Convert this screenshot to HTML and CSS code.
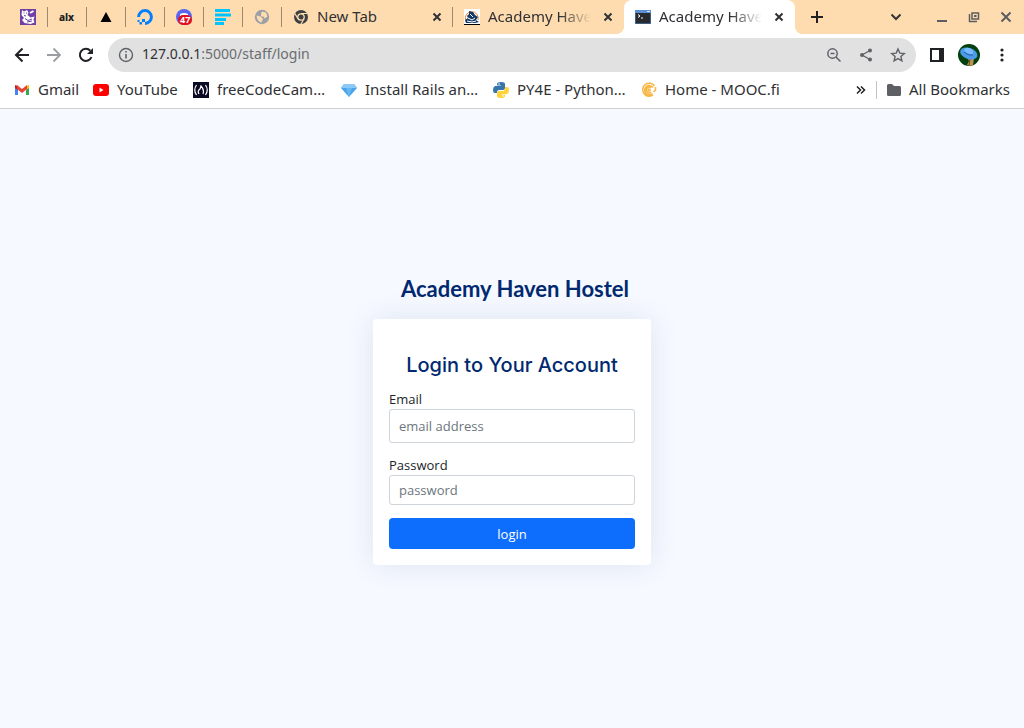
FILE: index.html
```html
<!DOCTYPE html>
<html lang="en">
<head>
<meta charset="utf-8">
<meta name="viewport" content="width=device-width, initial-scale=1">
<title>Academy Haven Hostel</title>
<link rel="stylesheet" href="styles.css">
</head>
<body>
<header class="browser">
  <div class="tabs">
    <button class="tab tab-pinned" aria-label="Pinned cat tab"><svg width="16" height="16" viewBox="0 0 16 16"><path fill="#7040a5" d="M0 0h16v16H0z"/><path fill="#fff" d="M2 1l2 1.500L7 1l1.500 2.500-1 2.500 3 2.500 4-1-1 3 1 3-4 1.500-6-1-2.500-3L4 9 1.500 6z"/><path d="M3.500 4h1M6 4h1M4 6.500l2 .500M5 9.500l3 2 4-1.500M7 13l5-1" stroke="#7040a5" fill="none"/><path d="M10 4l3.500-2" stroke="#fff" stroke-width="2"/></svg></button>
    <button class="tab tab-pinned tab-word">alx</button>
    <button class="tab tab-pinned" aria-label="Triangle tab"><svg width="16" height="16" viewBox="0 0 16 16"><path d="M8 3l5.500 10h-11z"/></svg></button>
    <button class="tab tab-pinned" aria-label="Cloud tab"><svg width="16" height="16" viewBox="0 0 16 16"><path d="M1.600 8a6.400 6.400 0 1 1 6.400 6.400" fill="none" stroke="#0080ff" stroke-width="3"/><path fill="#0080ff" d="M5 10h3v3H5zM2.500 13H5v2.500H2.500zM.500 11h2v2h-2z"/></svg></button>
    <button class="tab tab-pinned tab-chat" aria-label="Chat tab"><svg width="16" height="16" viewBox="0 0 16 16"><circle cx="8" cy="8" r="8" fill="#5865f2"/><path d="M4 5q4-2 8 0v2H4z" fill="#fff"/></svg><span class="count">47</span></button>
    <button class="tab tab-pinned" aria-label="Notes tab"><svg width="16" height="16" viewBox="0 0 16 16"><path fill="#00c4ff" d="M0 0h15v3H0zM0 4.500h16v3H0zM0 9h11v3H0zM0 13h9v3H0z"/></svg></button>
    <button class="tab tab-pinned" aria-label="Globe tab"><svg width="16" height="16" viewBox="0 0 16 16"><circle cx="8" cy="8" r="7.200" fill="#9aa0a6"/><path d="M2.500 6.500l4 1 2.500 2.500-1.500 3.500Q3 12.500 2.500 6.500M8 2.500l4 1 1.500 4-3 2-1-2H7V5z" fill="#fedcb0"/></svg></button>
    <div class="tab tab-wide"><svg width="16" height="16" viewBox="0 0 16 16"><circle cx="8" cy="8" r="7" fill="#3c4043"/><circle cx="8" cy="8" r="3.200" fill="#3c4043" stroke="#fedcb0" stroke-width="1.300"/><path d="M8 4.500h6.500M5 9.800L1.700 4.200M11 9.800l-3 5.200" stroke="#fedcb0" stroke-width="1.200"/></svg><span class="tab-title">New Tab</span><button class="close" aria-label="Close tab"><svg width="10" height="10" viewBox="0 0 10 10"><path d="M1.500 1.500l7 7m0-7l-7 7"/></svg></button></div>
    <div class="tab tab-wide tab-before"><svg width="16" height="16" viewBox="0 0 16 16"><path fill="#fff" d="M0 0h16v16H0z"/><path d="M1.500 11A6.500 6.500 0 1 1 14 11" fill="none" stroke="#e58a3c"/><path fill="#173b66" d="M5 2l4 1 2 3 3 2-2 3 3 2-4 1H2l-1-3 3-2-1-2 2-2z"/><path d="M6 5l3 3M4 9l4 2 3-2M3 12l5 1 4-1" stroke="#fff" fill="none"/><path d="M0 15h16v1H0z"/></svg><span class="tab-title">Academy Haven</span><button class="close" aria-label="Close tab"><svg width="10" height="10" viewBox="0 0 10 10"><path d="M1.500 1.500l7 7m0-7l-7 7"/></svg></button></div>
    <div class="tab tab-wide tab-active"><svg width="16" height="16" viewBox="0 0 16 16"><path fill="#5a8fd8" d="M0 1h16v14H0z"/><path fill="#272b30" d="M.500 4h15v10.500H.500z"/><path d="M3 5.500l2 1.500-2 1.500M6 9h2" fill="none" stroke="#fff"/><path d="M12 2.500h3" stroke="#dce8fa"/></svg><span class="tab-title">Academy Haven</span><button class="close" aria-label="Close tab"><svg width="10" height="10" viewBox="0 0 10 10"><path d="M1.500 1.500l7 7m0-7l-7 7"/></svg></button></div>
    <button class="new-tab" aria-label="New tab"><svg width="14" height="14" viewBox="0 0 14 14"><path d="M7 1v12M1 7h12" stroke="#202124" stroke-width="2"/></svg></button>
    <div class="window">
      <button aria-label="Search tabs"><svg width="12" height="12" viewBox="0 0 12 12"><path d="M1.500 3.500L6 8l4.500-4.500" fill="none" stroke="#333" stroke-width="2"/></svg></button>
      <button aria-label="Minimize"><svg width="12" height="12" viewBox="0 0 12 12"><path d="M1 10h10" stroke="#5b5d60" stroke-width="2"/></svg></button>
      <button aria-label="Restore"><svg width="12" height="12" viewBox="0 0 12 12"><path d="M4 2h6.500v6H4zM1.500 3v7.500H9" fill="none" stroke="#5b5d60" stroke-width="1.500"/><path d="M6 4h2.500v2H6z" fill="#5b5d60"/></svg></button>
      <button aria-label="Close window"><svg width="12" height="12" viewBox="0 0 12 12"><path d="M1.500 1.500l9 9m0-9l-9 9" stroke="#5b5d60" stroke-width="2"/></svg></button>
    </div>
  </div>
  <div class="toolbar">
    <div class="history">
      <button aria-label="Back"><svg width="16" height="16" viewBox="0 0 16 16"><path d="M15 8H2m6.500-6.500L2 8l6.500 6.500" fill="none" stroke="#202124" stroke-width="2"/></svg></button>
      <button aria-label="Forward"><svg width="16" height="16" viewBox="0 0 16 16"><path d="M1 8h13M7.500 1.500L14 8l-6.500 6.500" fill="none" stroke="#9b9da0" stroke-width="1.800"/></svg></button>
      <button aria-label="Reload"><svg width="16" height="16" viewBox="0 0 16 16"><path d="M13.500 10a6 6 0 1 1-1.200-6.200" fill="none" stroke="#202124" stroke-width="2"/><path d="M15 1v6H9z" fill="#202124"/></svg></button>
    </div>
    <div class="address">
      <svg width="16" height="16" viewBox="0 0 16 16"><circle cx="8" cy="8" r="6.500" fill="none" stroke="#5f6368" stroke-width="1.400"/><path d="M8 7v4.500M8 4v1.600" stroke="#5f6368" stroke-width="1.600"/></svg>
      <span class="url">127.0.0.1<span class="path">:5000/staff/login</span></span>
      <button aria-label="Zoom"><svg width="16" height="16" viewBox="0 0 16 16"><circle cx="6.500" cy="6.500" r="4.700" fill="none" stroke="#5f6368" stroke-width="1.500"/><path d="M10 10l4.500 4.500M4.500 6.500h4" stroke="#5f6368" stroke-width="1.500"/></svg></button>
      <button aria-label="Share"><svg width="16" height="16" viewBox="0 0 16 16"><path d="M12 3.500L4 8l8 4.500" fill="none" stroke="#5f6368" stroke-width="1.300"/><g fill="#5f6368"><circle cx="12" cy="3.500" r="2"/><circle cx="4" cy="8" r="2"/><circle cx="12" cy="12.500" r="2"/></g></svg></button>
      <button aria-label="Bookmark this page"><svg width="16" height="16" viewBox="0 0 16 16"><path d="M8 2l1.800 4.100 4.500.400-3.400 3 1 4.400L8 11.600l-3.900 2.300 1-4.400-3.400-3 4.500-.400z" fill="none" stroke="#5f6368" stroke-width="1.400"/></svg></button>
    </div>
    <button aria-label="Side panel"><svg width="14" height="14" viewBox="0 0 14 14"><path d="M1 1h12v12H1z" fill="none" stroke="#202124" stroke-width="2"/><path d="M9 1h4v12H9z" fill="#202124"/></svg></button>
    <button aria-label="Profile"><svg width="22" height="22" viewBox="0 0 22 22"><circle cx="11" cy="11" r="11" fill="#03400f"/><path d="M8 11l8 3-1 7q-3 1-6 0l2-4z" fill="#c0934e"/><path d="M12 15l-1 6" stroke="#6e4a20"/><ellipse cx="11" cy="9.500" rx="9" ry="5.500" transform="rotate(20 11 9)" fill="#4b9bea"/><path d="M6 7q1-4 5-3 5 1 4 6-5 1-9-3" fill="#79bbff"/><path d="M6 8q4 4 9 3" fill="none" stroke="#225da8"/></svg></button>
    <button aria-label="Menu"><svg width="16" height="16" viewBox="0 0 16 16" fill="#202124"><circle cx="8" cy="3" r="1.600"/><circle cx="8" cy="8" r="1.600"/><circle cx="8" cy="13" r="1.600"/></svg></button>
  </div>
  <nav class="bookmarks">
    <div class="links">
      <a href="#"><svg width="16" height="16" viewBox="0 0 16 16"><path d="M1 4v9h3V6z" fill="#4285f4"/><path d="M15 4v9h-3V6z" fill="#34a853"/><path d="M1 3l3 1v4L1 6z" fill="#c5221f"/><path d="M15 3l-3 1v4l3-2z" fill="#fbbc04"/><path d="M3 3l5 4 5-4v4l-5 4-5-4z" fill="#ea4335"/></svg><span>Gmail</span></a>
      <a href="#"><svg width="16" height="16" viewBox="0 0 16 16"><rect y="2" width="16" height="12" rx="3" fill="#f00"/><path d="M6.500 5.500l4 2.500-4 2.500z" fill="#fff"/></svg><span>YouTube</span></a>
      <a href="#"><svg width="16" height="16" viewBox="0 0 16 16"><path fill="#0a0a23" d="M0 0h16v16H0z"/><path d="M3.500 3Q0 8 3.500 13M12.500 3q3.500 5 0 10" fill="none" stroke="#fff" stroke-width="1.200"/><path d="M6 12q-2-3 1-5l1-3q3.500 4 2 8" fill="none" stroke="#fff" stroke-width="1.200"/></svg><span>freeCodeCam…</span></a>
      <a href="#"><svg width="16" height="16" viewBox="0 0 16 16"><path d="M3 2h10l3 4-8 9-8-9z" fill="#4aa3ea"/><path d="M3 2h10l3 4H0z" fill="#8bcaf7"/><path d="M5 6h6l-3 9z" fill="#65b7f3"/></svg><span>Install Rails an…</span></a>
      <a href="#"><svg width="16" height="16" viewBox="0 0 16 16"><path d="M4 4V2q0-2 4-2t4 2v4q0 2-2 2H6q-2 0-2 3H2q-2 0-2-3t2-4h6V3.500H4z" fill="#3776ab"/><path d="M12 12v2q0 2-4 2t-4-2v-3q0-2 2-2h4q2 0 2-4h2q2 0 2 3t-2 4H8v.500h4z" fill="#ffd43b"/><circle cx="6" cy="2" r=".8" fill="#fff"/><circle cx="10" cy="14" r=".8" fill="#fff"/></svg><span>PY4E - Python…</span></a>
      <a href="#"><svg width="16" height="16" viewBox="0 0 16 16" fill="none" stroke="#f8b541" stroke-width="1.500"><path d="M13.500 4A6.500 6.500 0 1 0 12 13M12 5.500A4.600 4.600 0 1 0 11.500 11.500M10 6a2.800 2.800 0 1 0 0 4M14.500 5v3l-2 2"/><circle cx="8" cy="8" r="1"/></svg><span>Home - MOOC.fi</span></a>
    </div>
    <button aria-label="More bookmarks"><svg width="10" height="10" viewBox="0 0 10 10"><path d="M1 1.500L4.500 5 1 8.500M5 1.500L8.500 5 5 8.500" fill="none" stroke="#202124" stroke-width="1.500"/></svg></button>
    <a class="all" href="#"><svg width="14" height="16" viewBox="0 0 14 16"><path d="M0 3.500Q0 2 1.500 2H5l2 2h5.500Q14 4 14 5.500v7q0 1.500-1.500 1.500h-11Q0 14 0 12.500z" fill="#5f6063"/></svg><span>All Bookmarks</span></a>
  </nav>
</header>
<main class="page">
  <div class="login">
    <h1 class="brand">Academy Haven Hostel</h1>
    <form class="card">
      <h2 class="heading">Login to Your Account</h2>
      <div class="field"><label for="email">Email</label><input class="email" id="email" type="email" placeholder="email address"></div>
      <div class="field"><label for="password">Password</label><input id="password" type="password" placeholder="password"></div>
      <button class="submit" type="submit">login</button>
    </form>
  </div>
</main>
</body>
</html>
```
FILE: styles.css
```css
* { box-sizing: border-box; }
body {
  margin: 0;
  min-height: 100vh;
  display: flex;
  flex-direction: column;
  background: #f6f9ff;
  color: #212529;
  font-family: "Open Sans", sans-serif;
  font-size: 13px;
}
button, input { font: inherit; }
button { border: 0; padding: 0; background: none; color: inherit; }
a { color: inherit; text-decoration: none; }
svg { display: block; flex: none; }

.browser {
  background: #fff;
  border-bottom: 1px solid #d0d0d0;
  font-family: "Noto Sans", sans-serif;
  font-size: 15px;
  line-height: 20px;
  color: #303134;
}
.browser button { display: flex; align-items: center; justify-content: center; flex: none; }

/* Tab strip */
.tabs { display: flex; height: 34px; padding-left: 9px; background: #fedcb0; }
.tab { display: flex; align-items: center; }
.tab:not(.tab-active):not(.tab-before) {
  background: linear-gradient(#9b8970, #9b8970) right center / 1px 20px no-repeat;
}
.browser .tab-pinned { width: 39px; padding-right: 2px; }
.browser .tab-word { font-size: 10px; font-weight: 800; color: #202124; }
.tab-chat { position: relative; }
.count {
  position: absolute;
  left: 13px;
  top: 15px;
  padding: 0 2px;
  border-radius: 5px;
  background: #e01020;
  color: #fff;
  font-size: 9px;
  font-weight: 700;
  line-height: 10px;
}
.tab-wide { flex: 0 1 171px; min-width: 0; padding: 0 11px; }
.tab-title {
  flex: 1;
  min-width: 0;
  margin: 0 12px 0 8px;
  padding-bottom: 2px;
  overflow: hidden;
  white-space: nowrap;
}
.tab-before .tab-title, .tab-active .tab-title {
  -webkit-mask-image: linear-gradient(to right, #000 70%, transparent);
  mask-image: linear-gradient(to right, #000 70%, transparent);
}
.tab-before { border-radius: 0 0 8px 0; background: #fedcb0; }
.tab-active { position: relative; background: #fff; border-radius: 8px 8px 0 0; }
.tab-active::before, .tab-active::after {
  content: "";
  position: absolute;
  bottom: 0;
  width: 8px;
  height: 8px;
}
.tab-active::before { right: 100%; background: radial-gradient(circle at 0 0, #fedcb0 8px, #fff 8px); }
.tab-active::after { left: 100%; background: radial-gradient(circle at 100% 0, #fedcb0 8px, #fff 8px); }
.close path { stroke: #303134; stroke-width: 2; }
.new-tab { width: 44px; }
.window { display: flex; gap: 20px; margin-left: auto; padding-right: 12px; }
.window button:first-child { margin-right: 14px; }

/* Toolbar */
.toolbar { display: flex; align-items: center; gap: 14px; padding: 4px 14px; }
.history { display: flex; gap: 16px; }
.address {
  flex: 1;
  display: flex;
  align-items: center;
  gap: 16px;
  height: 34px;
  padding: 0 10px;
  border-radius: 17px;
  background: #e1e1e1;
}
.url { flex: 1; margin-left: -8px; padding-bottom: 2px; color: #303134; font-size: 14px; }
.path { color: #6b6d70; }

/* Bookmarks */
.bookmarks { display: flex; align-items: center; height: 32px; padding: 0 14px 4px; }
.bookmarks a { display: flex; align-items: center; gap: 8px; white-space: nowrap; }
.bookmarks span { padding-bottom: 2px; }
.links {
  flex: 1;
  display: grid;
  grid-template-columns: 63px 84px 132px 136px 132px 133px;
  gap: 16px;
}
.bookmarks .all { margin-left: 10px; padding-left: 10px; border-left: 1px solid #c4c4c4; line-height: 16px; }

/* Login page */
.page { flex: 1; display: flex; align-items: center; justify-content: center; padding: 16px; }
.login { width: 100%; max-width: 278px; }
.brand {
  margin: 0 0 13px;
  padding-left: 6px;
  color: #012970;
  font-family: Lato, sans-serif;
  font-size: 22px;
  font-weight: 700;
  line-height: 34px;
  text-align: center;
}
.card {
  padding: 34px 16px 16px;
  border-radius: 4px;
  background: #fff;
  box-shadow: 0 0 30px rgba(1, 41, 112, 0.1);
}
.heading {
  margin: 0 0 12px;
  color: #012970;
  font-family: Inter, sans-serif;
  font-size: 20px;
  font-weight: 500;
  line-height: 24px;
  text-align: center;
}
.field { margin-bottom: 12px; }
.field label { display: block; line-height: 20px; }
.field input {
  display: block;
  width: 100%;
  height: 30px;
  padding: 0 9px;
  border: 1px solid #ced4da;
  border-radius: 3px;
  background: #fff;
  color: #212529;
}
.field .email { height: 34px; }
.field input::placeholder { color: #6c757d; opacity: 1; }
.submit {
  display: block;
  width: 100%;
  height: 31px;
  margin-top: 13px;
  border-radius: 4px;
  background: #0d6efd;
  color: #fff;
}
```
